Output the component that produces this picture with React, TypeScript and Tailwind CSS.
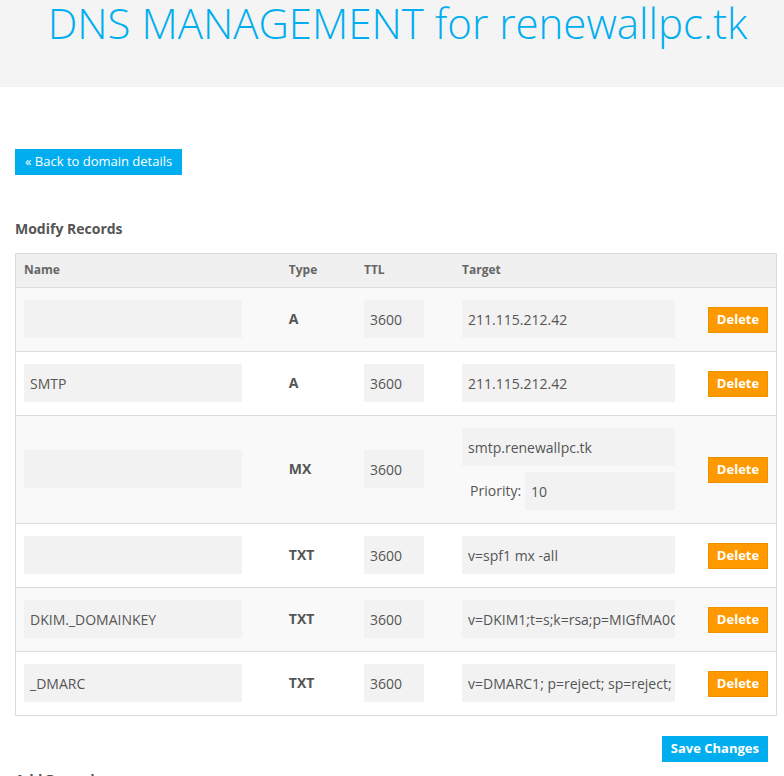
import React from "react";

type DnsRecord = {
  name: string;
  type: string;
  ttl: string;
  target: string;
  priority?: string;
};

const records: DnsRecord[] = [
  { name: "", type: "A", ttl: "3600", target: "211.115.212.42" },
  { name: "SMTP", type: "A", ttl: "3600", target: "211.115.212.42" },
  { name: "", type: "MX", ttl: "3600", target: "smtp.renewallpc.tk", priority: "10" },
  { name: "", type: "TXT", ttl: "3600", target: "v=spf1 mx -all" },
  {
    name: "DKIM._DOMAINKEY",
    type: "TXT",
    ttl: "3600",
    target: "v=DKIM1;t=s;k=rsa;p=MIGfMA0GCSqGSIb3DQEBAQUAA4GNADCBiQKBgQC",
  },
  { name: "_DMARC", type: "TXT", ttl: "3600", target: "v=DMARC1; p=reject; sp=reject; adkim=s; aspf=s" },
];

// fake read-only inputs, grey boxes like the original form fields
const inputCls =
  "block h-[38px] bg-[#f2f2f2] px-[6px] text-[14px] leading-[40px] text-[#555] outline-none border-0 overflow-hidden";

export default function App() {
  return (
    <div className="min-h-screen bg-white font-['Open_Sans',sans-serif] text-[#555]">
      {/* page title band */}
      <div className="h-[87px] bg-[#f4f4f4] text-center">
        <h1 className="pl-[11px] text-[42px] leading-[46px] font-light text-[#00aeef]">
          DNS MANAGEMENT for renewallpc.tk
        </h1>
      </div>

      <div className="px-[15px] pt-[61px]">
        <button className="h-[26px] bg-[#00aeef] px-[10px] text-[13px] text-white">
          « Back to domain details
        </button>

        <h3 className="mt-[44px] text-[14px] font-bold leading-[20px] text-[#555]">Modify Records</h3>

        <table className="mt-[14px] w-[762px] table-fixed border-collapse border border-[#dcdcdc]">
          <colgroup>
            <col className="w-[265px]" />
            <col className="w-[75px]" />
            <col className="w-[98px]" />
            <col className="w-[245px]" />
            <col className="w-[77px]" />
          </colgroup>
          <thead>
            <tr className="h-[34px] bg-[#f0f0f0] text-left text-[12px] font-bold text-[#666]">
              <th className="pl-[8px] font-bold">Name</th>
              <th className="pl-[8px] font-bold">Type</th>
              <th className="pl-[8px] font-bold">TTL</th>
              <th className="pl-[8px] font-bold">Target</th>
              <th />
            </tr>
          </thead>
          <tbody>
            {records.map((r, i) => (
              <tr
                key={i}
                className={`border-t border-[#dcdcdc] ${i % 2 === 0 ? "bg-[#f9f9f9]" : "bg-white"}`}
              >
                <td className="pl-[8px] pt-[12px] pb-[13px] align-middle">
                  <div className={`${inputCls} w-[218px]`}>{r.name}</div>
                </td>
                <td className="pl-[8px] align-middle text-[14px] font-bold text-[#555]">
                  <span className="relative -top-[1px]">{r.type}</span>
                </td>
                <td className="pl-[8px] align-middle">
                  <div className={`${inputCls} w-[60px]`}>{r.ttl}</div>
                </td>
                <td className="pl-[8px] pt-[12px] pb-[13px] align-middle">
                  <div className={`${inputCls} w-[213px] whitespace-nowrap`}>{r.target}</div>
                  {r.priority && (
                    <div className="mt-[6px] flex w-[213px] items-center">
                      <span className="pl-[8px] pr-[4px] text-[14px] text-[#555]">Priority:</span>
                      <div className={`${inputCls} flex-1`}>{r.priority}</div>
                    </div>
                  )}
                </td>
                <td className="pr-[8px] text-right align-middle">
                  <button className="h-[26px] w-[60px] border border-[#f29100] bg-[#ff9900] text-[13px] font-bold text-white">
                    Delete
                  </button>
                </td>
              </tr>
            ))}
          </tbody>
        </table>

        <div className="mt-[20px] flex w-[762px] justify-end pr-[9px]">
          <button className="h-[26px] bg-[#00aeef] px-[9px] text-[13px] font-bold text-white">
            Save Changes
          </button>
        </div>

        <h3 className="mt-[8px] text-[14px] font-bold leading-[20px] text-[#555]">Add Record</h3>
      </div>
    </div>
  );
}
